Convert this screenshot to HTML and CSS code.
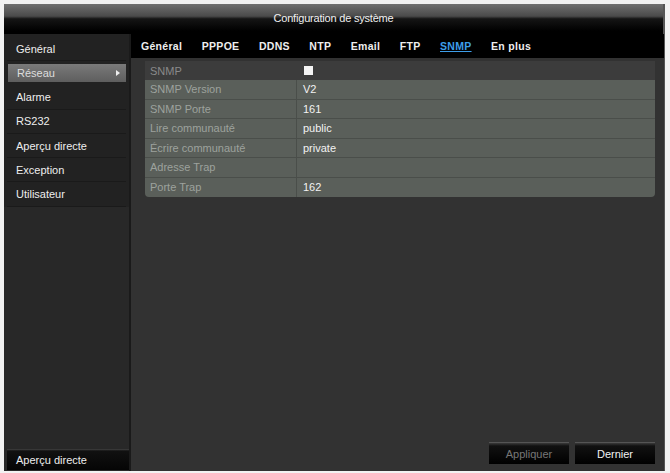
FILE: index.html
```html
<!DOCTYPE html>
<html lang="fr">
<head>
<meta charset="utf-8">
<title>Configuration de système</title>
<link rel="stylesheet" href="styles.css">
</head>
<body>
<div class="window">
  <div class="titlebar">Configuration de système</div>
  <div class="body">
    <aside class="sidebar">
      <ul class="menu">
        <li class="item">Général</li>
        <li class="item active">Réseau<span class="arrow"></span></li>
        <li class="item">Alarme</li>
        <li class="item">RS232</li>
        <li class="item">Aperçu directe</li>
        <li class="item">Exception</li>
        <li class="item">Utilisateur</li>
      </ul>
      <div class="sidebar-bottom">
        <div class="live-btn">Aperçu directe</div>
      </div>
    </aside>
    <main class="main">
      <nav class="tabs">
        <span class="tab">Général</span>
        <span class="tab">PPPOE</span>
        <span class="tab">DDNS</span>
        <span class="tab">NTP</span>
        <span class="tab">Email</span>
        <span class="tab">FTP</span>
        <span class="tab current">SNMP</span>
        <span class="tab">En plus</span>
      </nav>
      <div class="panel">
        <div class="table">
          <div class="row head"><span class="label">SNMP</span><span class="value"><span class="check"></span></span></div>
          <div class="row"><span class="label">SNMP Version</span><span class="value">V2</span></div>
          <div class="row"><span class="label">SNMP Porte</span><span class="value">161</span></div>
          <div class="row"><span class="label">Lire communauté</span><span class="value">public</span></div>
          <div class="row"><span class="label">Écrire communauté</span><span class="value">private</span></div>
          <div class="row"><span class="label">Adresse Trap</span><span class="value"></span></div>
          <div class="row last"><span class="label">Porte Trap</span><span class="value">162</span></div>
        </div>
        <div class="spacer"></div>
        <div class="actions">
          <button class="btn disabled">Appliquer</button>
          <button class="btn">Dernier</button>
        </div>
      </div>
    </main>
  </div>
</div>
</body>
</html>
```

FILE: styles.css
```css
* { box-sizing: border-box; }
html, body { margin: 0; padding: 0; }
body {
  background: #f2f2f2;
  width: 670px;
  height: 473px;
  padding: 4px 5px 2px 4px;
  font-family: "Liberation Sans", Arial, sans-serif;
  font-size: 11px;
  color: #fff;
  overflow: hidden;
}
.window {
  width: 661px;
  height: 467px;
  background: #2f2f2f;
  display: flex;
  flex-direction: column;
  border-right: 2px solid #555;
}
.titlebar {
  height: 27px;
  flex: none;
  background: linear-gradient(to bottom, #707070 0%, #4a4a4a 45%, #151515 55%, #000 100%);
  text-align: center;
  line-height: 28px;
  font-size: 11px;
  color: #f0f0f0;
  letter-spacing: -0.2px;
}
.body {
  flex: 1;
  display: flex;
  background: #000;
  padding-top: 3px;
}
.sidebar {
  width: 127px;
  flex: none;
  background: #272727;
  display: flex;
  flex-direction: column;
  border-right: 2px solid #1a1a1a;
}
.menu {
  list-style: none;
  margin: 0;
  padding: 3px 0 0 0;
  background: #222;
}
.item {
  height: 24.3px;
  display: flex;
  align-items: center;
  padding-left: 9px;
  margin: 0 3px;
  border-bottom: 1px solid #1a1a1a;
  color: #eee;
  font-size: 11px;
  position: relative;
}
.item.active {
  background: linear-gradient(to bottom, #7a7a7a, #5e5e5e);
  color: #ddd;
  height: 18px;
  margin: 3px 3px 3px 4px;
  border-bottom: none;
}
.arrow {
  position: absolute;
  right: 6px;
  top: 6px;
  width: 0;
  height: 0;
  border-top: 3px solid transparent;
  border-bottom: 3px solid transparent;
  border-left: 4px solid #eee;
}
.sidebar-bottom {
  flex: 1;
  display: flex;
  flex-direction: column;
  justify-content: flex-end;
  background: #282828;
}
.live-btn {
  height: 21px;
  margin: 0 0 1px 3px;
  padding-left: 9px;
  display: flex;
  align-items: center;
  background: linear-gradient(to bottom, #444 0, #111 2px, #050505 100%);
  color: #eee;
}
.main {
  flex: 1;
  display: flex;
  flex-direction: column;
  background: #333;
}
.tabs {
  height: 24px;
  flex: none;
  background: #000;
  display: flex;
  align-items: center;
  padding-left: 10px;
}
.tab {
  font-weight: bold;
  font-size: 10.5px;
  color: #eee;
  margin-right: 19.5px;
  letter-spacing: 0.3px;
}
.tab.current {
  color: #3d9de8;
  text-decoration: underline;
}
.panel {
  flex: 1;
  display: flex;
  flex-direction: column;
  padding: 3px 9px 7px 14px;
  background: #323232;
}
.table {
  display: flex;
  flex-direction: column;
  border-radius: 0 0 4px 4px;
  overflow: hidden;
  width: 510px;
}
.row {
  display: flex;
  height: 19.5px;
  background: #5a5f5a;
  border-bottom: 1px solid #4a4e4a;
  align-items: center;
}
.row.last { border-bottom: none; }
.row.head {
  background: #3c3c3c;
  height: 19px;
  border-bottom: none;
}
.label {
  width: 152px;
  height: 100%;
  display: flex;
  align-items: center;
  padding-left: 5px;
  color: #9da29d;
  border-right: 1px solid #4a4e4a;
}
.row.head .label { border-right: none; color: #8a8a8a; }
.value {
  padding-left: 6px;
  color: #f2f2f2;
}
.check {
  display: block;
  width: 9px;
  height: 9px;
  background: #f4f4f4;
  margin-left: 1px;
}
.spacer { flex: 1; }
.actions {
  display: flex;
  justify-content: flex-end;
  gap: 6px;
  padding-right: 0;
}
.btn {
  width: 80px;
  height: 22px;
  border: none;
  border-top: 1px solid #555;
  background: linear-gradient(to bottom, #3a3a3a 0, #111 3px, #000 100%);
  color: #f2f2f2;
  font-family: "Liberation Sans", Arial, sans-serif;
  font-size: 11px;
  padding: 0;
}
.btn.disabled { color: #777; }
```
